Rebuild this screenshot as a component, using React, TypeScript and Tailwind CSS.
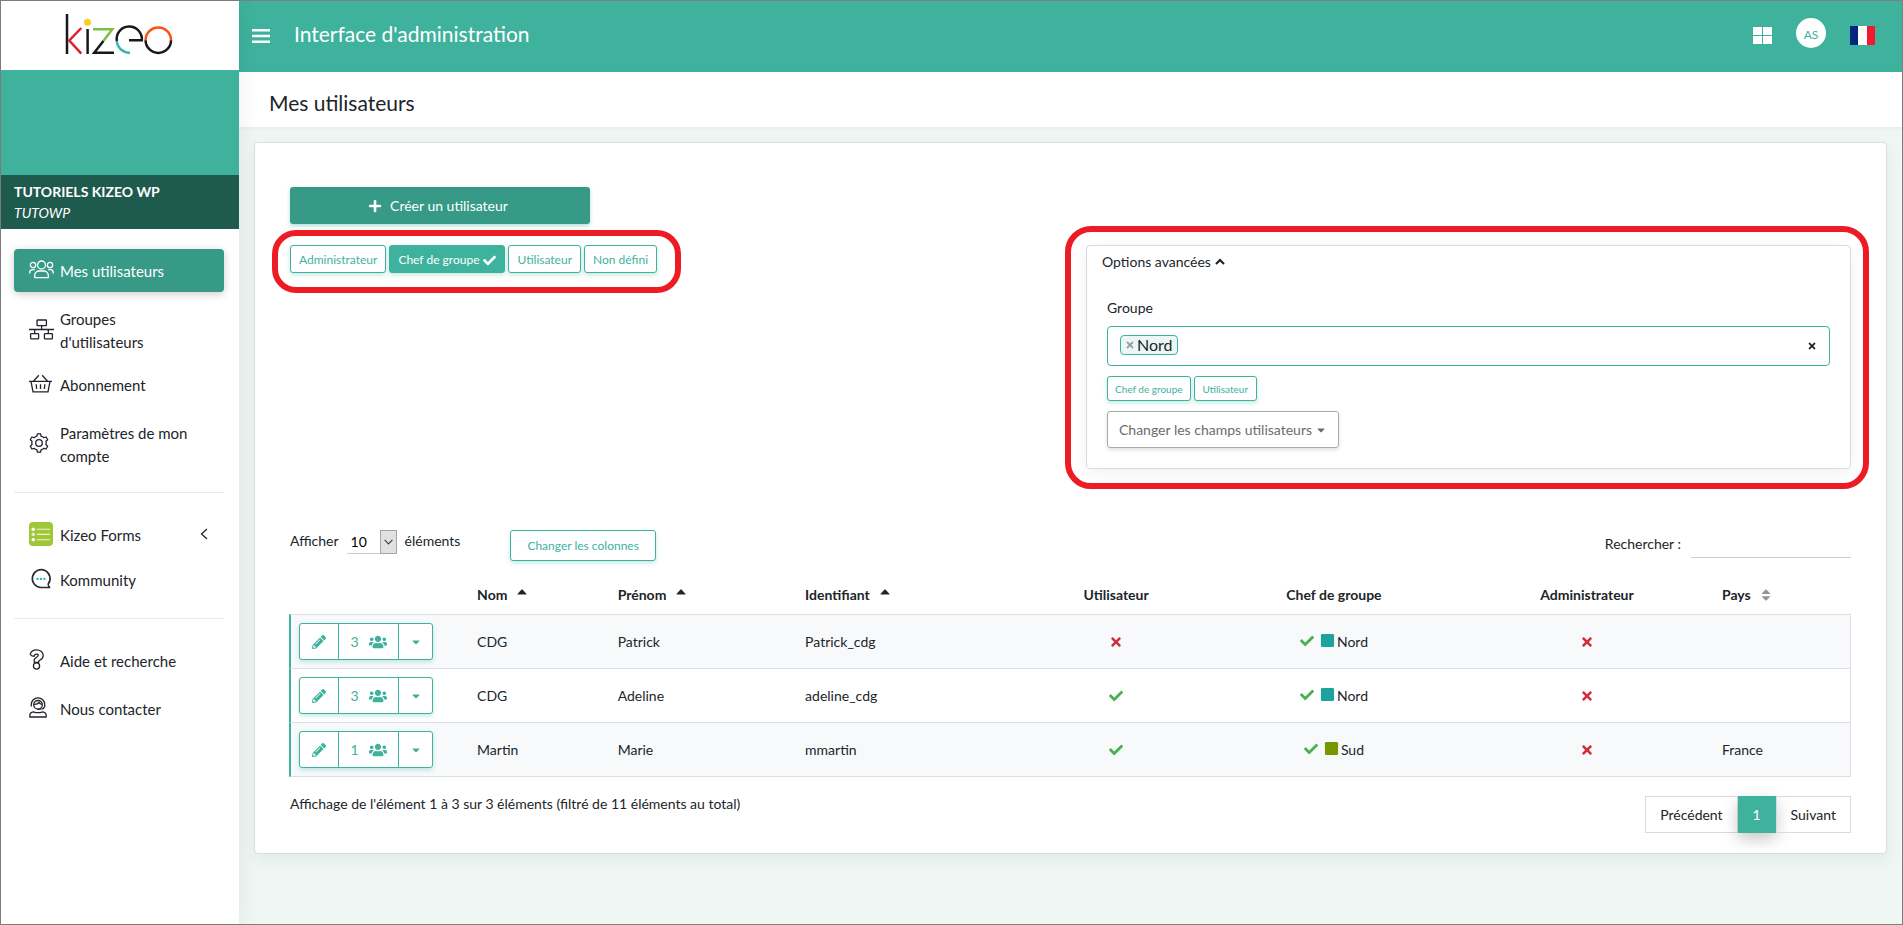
import React from "react";
import {
  FaCaretDown,
  FaCheck,
  FaPencilAlt,
  FaPlus,
  FaSquare,
  FaTimes,
  FaUsers,
} from "react-icons/fa";

function KizeoLogo() {
  return (
    <svg viewBox="65 13 108 42" className="h-[42px] w-[108px]" fill="none" strokeWidth="2.5" role="img" aria-label="kizeo">
      <path d="M67 14V54" stroke="#1a171b" />
      <path d="M81.3 28L69.3 40.5L81.3 53.6" stroke="#e2202c" />
      <path d="M87.6 29V54" stroke="#1a171b" />
      <circle cx="87.5" cy="22.3" r="3.5" fill="#ffcb1f" />
      <path d="M93 29.2H112.3L103.4 41" stroke="#7ac143" />
      <path d="M103.4 41L94.2 52.7H114" stroke="#1a171b" />
      <path d="M116.8 41A12.6 12.6 0 1 1 141.8 40.3H129" stroke="#1a171b" />
      <path d="M116.8 41A12.6 12.6 0 0 0 130 52.7" stroke="#3cb4b4" />
      <path d="M145.6 40.2A12.7 12.7 0 0 1 171 40.2" stroke="#ff4f12" />
      <path d="M145.6 40.2A12.7 12.7 0 0 0 171 40.2" stroke="#1a171b" />
    </svg>
  );
}

function TeamIcon() {
  return (
    <svg viewBox="0 0 25 19" className="h-[19px] w-[25px]" fill="none" stroke="currentColor" strokeWidth="1.3">
      <circle cx="12.5" cy="5" r="4" />
      <circle cx="4" cy="5" r="2.7" />
      <circle cx="21" cy="5" r="2.7" />
      <path d="M5.7 17.6V15.4A4.6 4.6 0 0 1 10.3 11H14.7A4.6 4.6 0 0 1 19.3 15.4V17.6Z" strokeLinejoin="round" />
      <path d="M.8 13.6V12.3A2.8 2.8 0 0 1 3.6 9.7H5.8M24.2 13.6V12.3A2.8 2.8 0 0 0 21.4 9.7H19.2" />
    </svg>
  );
}

function NetworkIcon() {
  return (
    <svg viewBox="0 0 25 21" className="h-[21px] w-[25px]" fill="none" stroke="currentColor" strokeWidth="1.3">
      <rect x="8" y="1" width="9.4" height="5.6" rx=".6" />
      <path d="M12.6 6.6V10.5M0 10.5H25M5.7 10.5V14.6M19.3 10.5V14.6" />
      <rect x="1.6" y="14.6" width="8" height="5.2" rx=".6" />
      <rect x="15.4" y="14.6" width="8" height="5.2" rx=".6" />
    </svg>
  );
}

function BasketIcon() {
  return (
    <svg viewBox="0 0 23 19" className="h-[19px] w-[23px]" fill="none" stroke="currentColor" strokeWidth="1.3">
      <path d="M0 7.4H23M2 7.4L4 17.8H19L21 7.4M4.4 7.2L9.8 1.2M18.6 7.2L13.2 1.2" />
      <path d="M7.2 10.2L7.6 15M11.5 10.2V15M15.8 10.2L15.4 15" />
    </svg>
  );
}

function GearIcon() {
  return (
    <svg viewBox="0 0 20 20" className="h-5 w-5" fill="none" stroke="currentColor" strokeWidth="1.3" strokeLinejoin="round">
      <circle cx="10" cy="10" r="3.3" />
      <path d="M8 3.1L8.4 .9H11.6L12 3.1A7.2 7.2 0 0 1 14.9 4.7L17.1 4L18.7 6.8L17 8.3A7.5 7.5 0 0 1 17 11.7L18.7 13.2L17.1 16L14.9 15.3A7.2 7.2 0 0 1 12 16.9L11.6 19.1H8.4L8 16.9A7.2 7.2 0 0 1 5.1 15.3L2.9 16L1.3 13.2L3 11.7A7.5 7.5 0 0 1 3 8.3L1.3 6.8L2.9 4L5.1 4.7A7.2 7.2 0 0 1 8 3.1Z" />
    </svg>
  );
}

function FormsIcon() {
  return (
    <svg viewBox="0 0 24 24" className="size-6">
      <rect width="24" height="24" rx="4" fill="#9fc739" />
      <g fill="#fff">
        <circle cx="4.3" cy="7.3" r="1.8" />
        <circle cx="4.3" cy="12.4" r="1.8" opacity=".7" />
        <circle cx="4.3" cy="17.8" r="1.8" />
      </g>
      <path d="M8 7.3H21M8 12.4H21M8 17.8H21" stroke="#eef5d4" strokeWidth="1.1" />
    </svg>
  );
}

function ChatIcon() {
  return (
    <svg viewBox="0 0 24 24" className="size-6" fill="none">
      <path d="M20.6 20.5H12A8.9 8.9 0 1 1 19.2 17.1Q19.2 19.4 20.6 20.5Z" stroke="#2b2b33" strokeWidth="1.6" strokeLinejoin="round" />
      <g fill="#18b5cf">
        <rect x="7.6" y="10.9" width="2" height="2" />
        <rect x="11" y="10.9" width="2" height="2" />
        <rect x="14.4" y="10.9" width="2" height="2" />
      </g>
    </svg>
  );
}

function HelpIcon() {
  return (
    <svg viewBox="0 0 15 21" className="h-[21px] w-[15px]" fill="none" stroke="currentColor" strokeWidth="1.3" strokeLinejoin="round">
      <path d="M1.2 5.2C2 2.3 4.6 .9 7.6 .9C11.3 .9 14.2 3.2 14.2 6.4C14.2 9.8 11.6 10.7 9.8 12V13.3H5.2V10.7C5.6 8.7 9.3 8.2 9.3 6.3C9.3 4.9 6.7 4.5 5.6 6.1L5 7.4C3.4 7.3 1.9 6.7 1.2 5.2Z" />
      <circle cx="7.5" cy="17" r="3.1" />
    </svg>
  );
}

function SupportIcon() {
  return (
    <svg viewBox="0 0 18 21" className="h-[21px] w-[18px]" fill="none" stroke="currentColor" strokeWidth="1.3" strokeLinejoin="round">
      <path d="M2.3 9.5V7.5A6.7 6.7 0 0 1 15.7 7.5V9.5A3.6 3.6 0 0 1 12.5 12" />
      <circle cx="9" cy="7.8" r="4.3" />
      <path d="M5 7.3Q8.5 7.5 10 5.3Q11 7 13 7.3M8.5 12.2H12" />
      <path d="M.8 20V18.2Q.9 15.3 4.5 14.8Q9 16.6 13.5 14.8Q17.1 15.3 17.2 18.2V20Z" />
    </svg>
  );
}

function NavItem({
  icon,
  label,
  className = "",
  active = false,
  arrow = false,
}: {
  icon: React.ReactNode;
  label: string;
  className?: string;
  active?: boolean;
  arrow?: boolean;
}) {
  const look = active
    ? "bg-[#369a86] text-white shadow-[0_2px_8px_rgba(0,0,0,0.2)]"
    : "text-[#212529]";
  return (
    <a href="#" className={`flex items-center gap-1.5 rounded px-[15px] pt-[11px] pb-[9px] leading-[23px] ${look} ${className}`}>
      <span className="-mt-1 flex w-[25px] shrink-0">{icon}</span>
      <span className="max-w-[130px]">{label}</span>
      {arrow && (
        <svg viewBox="0 0 8 12" className="-mt-1 mr-px ml-auto h-3 w-2" fill="none" stroke="currentColor" strokeWidth="1.3">
          <path d="M7 1L1.5 6L7 11" />
        </svg>
      )}
    </a>
  );
}

function Sidebar() {
  return (
    <aside className="z-10 flex w-[238px] shrink-0 flex-col bg-white text-[15px] shadow-[0_0_20px_rgba(0,0,0,0.08)]">
      <div className="flex h-[69px] items-center justify-center pr-[3px] pb-1">
        <KizeoLogo />
      </div>
      <div className="h-[105px] bg-[#3eb29d]" />
      <div className="bg-[#1f5a4e] px-[13px] py-1.5 text-sm leading-[21px] text-white">
        <p className="font-bold">TUTORIELS KIZEO WP</p>
        <p className="italic">TUTOWP</p>
      </div>
      <nav className="flex flex-col pt-5 pr-[15px] pl-[13px]">
        <NavItem icon={<TeamIcon />} label="Mes utilisateurs" active />
        <NavItem icon={<NetworkIcon />} label="Groupes d'utilisateurs" className="mt-[5px]" />
        <NavItem icon={<BasketIcon />} label="Abonnement" />
        <NavItem icon={<GearIcon />} label="Paramètres de mon compte" className="mt-[5px]" />
        <hr className="mt-[15px] mb-5 border-[#ebebeb]" />
        <NavItem icon={<FormsIcon />} label="Kizeo Forms" arrow />
        <NavItem icon={<ChatIcon />} label="Kommunity" className="mt-0.5" />
        <hr className="mt-[17px] mb-5 border-[#ebebeb]" />
        <NavItem icon={<HelpIcon />} label="Aide et recherche" />
        <NavItem icon={<SupportIcon />} label="Nous contacter" className="mt-[5px]" />
      </nav>
    </aside>
  );
}

function Header() {
  return (
    <header className="flex h-[71px] items-center bg-[#3eb29d] pr-[27px] pb-[7px] pl-[13px] text-white">
      <button type="button" aria-label="Menu">
        <svg viewBox="0 0 18 14" className="mt-[6px] h-3.5 w-[18px]" fill="currentColor">
          <path d="M0 0H18V2.4H0ZM0 5.8H18V8.2H0ZM0 11.6H18V14H0Z" />
        </svg>
      </button>
      <span className="ml-6 pt-0.5 text-[21px]">Interface d'administration</span>
      <div className="ml-auto flex items-center">
        <button type="button" aria-label="Applications">
          <svg viewBox="0 0 19 17" className="mt-[5px] h-[17px] w-[19px]" fill="currentColor">
            <path d="M0 0H9V8H0ZM10 0H19V8H10ZM0 9H9V17H0ZM10 9H19V17H10Z" />
          </svg>
        </button>
        <button type="button" className="ml-6 size-[30px] rounded-full bg-white pt-1 text-xs text-[#3eb29d]">
          AS
        </button>
        <button type="button" aria-label="Français" className="mt-[5px] ml-6 flex h-[19px] w-[25px]">
          <span className="h-full flex-1 bg-[#00267f]" />
          <span className="h-full flex-1 bg-white" />
          <span className="h-full flex-1 bg-[#f31830]" />
        </button>
      </div>
    </header>
  );
}

const outline = "rounded-[3px] border border-[#3eb29d] bg-white text-[#3eb29d] shadow-[0_2px_4px_rgba(62,178,157,0.3)]";

function RoleFilters() {
  return (
    <div className="relative mt-[21px] flex w-fit gap-[3px] text-xs leading-5">
      <button type="button" className={`${outline} px-2 pt-1 pb-0.5`}>Administrateur</button>
      <button type="button" className="flex items-center gap-1 rounded-[3px] border border-[#3eb29d] bg-[#3eb29d] px-2 pt-1 pb-0.5 text-white shadow-[0_2px_4px_rgba(62,178,157,0.3)]">
        Chef de groupe <FaCheck className="size-[13px]" />
      </button>
      <button type="button" className={`${outline} px-2 pt-1 pb-0.5`}>Utilisateur</button>
      <button type="button" className={`${outline} px-2 pt-1 pb-0.5`}>Non défini</button>
      <div className="pointer-events-none absolute -top-[15px] -right-6 -bottom-5 -left-[18px] rounded-[24px] border-[6px] border-[#ed1c24]" />
    </div>
  );
}

function AdvancedOptions() {
  return (
    <section className="relative mt-[58px] w-[765px] shrink-0 rounded border border-[#d5dde1] bg-white px-5 pt-[5px] pb-5 shadow-[0_4px_16px_rgba(0,0,0,0.06)]">
      <button type="button" className="-ml-[5px] flex items-center gap-1 leading-[21px]">
        Options avancées
        <svg viewBox="0 0 10 7" className="h-[7px] w-2.5" fill="none" stroke="currentColor" strokeWidth="2.2">
          <path d="M1 6L5 2L9 6" />
        </svg>
      </button>
      <label htmlFor="group" className="mt-[25px] block leading-[21px]">Groupe</label>
      <div className="mt-2 flex h-10 items-center rounded border border-[#3eb29d] px-3">
        <span className="mb-0.5 flex h-5 items-center gap-0.5 rounded border border-[#3eb29d] bg-[#ebf7f5] px-1 text-base leading-[18px]">
          <button type="button" aria-label="Retirer Nord">
            <FaTimes className="size-2.5 text-[#999]" />
          </button>
          Nord
        </span>
        <input id="group" className="min-w-0 flex-1 px-2 outline-none" />
        <button type="button" aria-label="Tout effacer">
          <FaTimes className="size-2.5" />
        </button>
      </div>
      <div className="mt-2.5 flex gap-[3px] text-[10px] leading-[18px]">
        <button type="button" className={`${outline} px-[7px] pt-[3px] pb-0.5`}>Chef de groupe</button>
        <button type="button" className={`${outline} px-2 pt-[3px] pb-0.5`}>Utilisateur</button>
      </div>
      <button type="button" className="mt-2.5 flex h-[37px] items-center gap-[3px] rounded-[3px] border border-[#aaa] px-[11px] text-[#6c6c6c] shadow-[0_2px_4px_rgba(0,0,0,0.12)]">
        Changer les champs utilisateurs <FaCaretDown className="size-3" />
      </button>
      <div className="pointer-events-none absolute -top-5 -right-[19px] -bottom-[21px] -left-[22px] rounded-[26px] border-[6px] border-[#ed1c24]" />
    </section>
  );
}

function SortUp() {
  return (
    <svg viewBox="0 0 10 14" className="ml-2.5 inline h-3.5 w-2.5 align-middle" fill="currentColor">
      <path d="M.5 5L4.5 .4H5.5L9.5 5V5.5H.5Z" />
    </svg>
  );
}

function SortBoth() {
  return (
    <svg viewBox="0 0 10 14" className="ml-2.5 inline h-3.5 w-2.5 align-middle" fill="#939699">
      <path d="M.5 5L4.5 .4H5.5L9.5 5ZM.5 7.2H9.5L5.5 11.6H4.5Z" />
    </svg>
  );
}

const Yes = () => <FaCheck className="mb-0.5 inline-block size-3.5 text-[#4caf50]" aria-label="Oui" />;
const No = () => <FaTimes className="mb-0.5 inline-block size-3.5 text-[#cf2e3c]" aria-label="Non" />;

const users = [
  { count: 3, nom: "CDG", prenom: "Patrick", id: "Patrick_cdg", user: false, group: "Nord", color: "text-[#1ea39c]", pays: "" },
  { count: 3, nom: "CDG", prenom: "Adeline", id: "adeline_cdg", user: true, group: "Nord", color: "text-[#1ea39c]", pays: "" },
  { count: 1, nom: "Martin", prenom: "Marie", id: "mmartin", user: true, group: "Sud", color: "text-[#789600]", pays: "France" },
];

function UsersTable() {
  return (
    <div className="mt-3 -ml-px">
      <table className="w-full table-fixed border-separate border-spacing-0 text-left">
        <colgroup>
          <col className="w-[11.4%]" />
          <col className="w-[9%]" />
          <col className="w-[12%]" />
          <col className="w-[14.8%]" />
          <col className="w-[11.5%]" />
          <col className="w-[16.4%]" />
          <col className="w-[16%]" />
          <col className="w-[8.9%]" />
        </colgroup>
        <thead>
          <tr className="h-[41px] *:pt-0.5">
            <th />
            <th className="px-2.5">Nom<SortUp /></th>
            <th className="px-2.5">Prénom<SortUp /></th>
            <th className="px-2.5">Identifiant<SortUp /></th>
            <th className="px-2.5 text-center">Utilisateur</th>
            <th className="px-2.5 text-center">Chef de groupe</th>
            <th className="px-2.5 text-center">Administrateur</th>
            <th className="px-2.5">Pays<SortBoth /></th>
          </tr>
        </thead>
        <tbody>
          {users.map((u) => (
            <tr
              key={u.id}
              className="h-[54px] odd:bg-[#f7f9fb] *:border-t *:border-[#dbdfe4] last:h-[55px] last:*:border-b *:first:border-l-2 *:first:border-l-[#3eb29d] *:last:border-r"
            >
              <td className="px-2">
                <div className={`${outline} flex h-[37px] w-fit items-stretch`}>
                  <button type="button" aria-label="Modifier" className="flex w-[38px] items-center justify-center">
                    <FaPencilAlt className="size-3.5" />
                  </button>
                  <button type="button" className="flex w-[61px] items-center justify-center gap-2.5 border-x border-[#3eb29d]">
                    {u.count} <FaUsers className="size-[18px]" />
                  </button>
                  <button type="button" aria-label="Plus d'actions" className="flex w-[33px] items-center justify-center">
                    <FaCaretDown className="size-3" />
                  </button>
                </div>
              </td>
              <td className="px-2.5">{u.nom}</td>
              <td className="px-2.5">{u.prenom}</td>
              <td className="px-2.5">{u.id}</td>
              <td className="px-2.5 text-center">{u.user ? <Yes /> : <No />}</td>
              <td className="px-2.5">
                <div className="flex items-center justify-center">
                  <Yes />
                  <FaSquare className={`mr-0.5 mb-0.5 ml-1.5 size-[15px] ${u.color}`} />
                  {u.group}
                </div>
              </td>
              <td className="px-2.5 text-center"><No /></td>
              <td className="px-2.5">{u.pays}</td>
            </tr>
          ))}
        </tbody>
      </table>
    </div>
  );
}

export default function App() {
  return (
    <div className="flex min-h-screen border border-[#808080] bg-[#eff7f4] font-['Lato',sans-serif] text-sm text-[#212529]">
      <Sidebar />
      <div className="flex min-w-0 flex-1 flex-col">
        <Header />
        <div className="bg-white px-[30px] pt-[17px] pb-2.5 shadow-[0_1px_4px_rgba(0,0,0,0.06)]">
          <h1 className="text-[21px] leading-7">Mes utilisateurs</h1>
        </div>
        <main className="mx-[15px] mt-[15px] mb-8 rounded border border-[#d8dee2] bg-white px-[35px] pt-11 pb-5 shadow-[0_6px_18px_rgba(0,0,0,0.06)]">
          <div className="flex items-start justify-between">
            <div>
              <button type="button" className="flex h-[37px] w-[300px] items-center justify-center gap-2 rounded-[3px] bg-[#369a86] pr-1 text-white shadow-[0_2px_4px_rgba(62,178,157,0.4)]">
                <FaPlus className="size-3.5" /> Créer un utilisateur
              </button>
              <RoleFilters />
            </div>
            <AdvancedOptions />
          </div>

          <div className="mt-[61px] flex items-start">
            <label htmlFor="length" className="pt-px">Afficher</label>
            <span className="relative mx-2">
              <select id="length" className="h-6 w-[50px] appearance-none border-b border-[#ccc] bg-white pl-1 text-sm text-black outline-none">
                <option>10</option>
              </select>
              <span className="pointer-events-none absolute top-0 right-0 flex h-6 w-[17px] items-center justify-center border border-[#a5a5a5] bg-[#e1e1e1]">
                <svg viewBox="0 0 9 6" className="h-1.5 w-[9px]" fill="none" stroke="#444" strokeWidth="1.2">
                  <path d="M.6 .8L4.5 4.8L8.4 .8" />
                </svg>
              </span>
            </span>
            <label htmlFor="length" className="pt-px">éléments</label>
            <button type="button" className={`${outline} ml-[50px] h-[31px] px-4 text-xs`}>
              Changer les colonnes
            </button>
            <label htmlFor="search" className="mt-1 ml-auto">Rechercher :</label>
            <input id="search" type="search" className="ml-2.5 h-7 w-40 border-b border-[#ccc] outline-none" />
          </div>

          <UsersTable />

          <div className="mt-[19px] flex items-start justify-between">
            <p className="leading-4">Affichage de l'élément 1 à 3 sur 3 éléments (filtré de 11 éléments au total)</p>
            <nav aria-label="Pagination" className="flex h-[37px] items-stretch">
              <a href="#" className="flex items-center border border-[#d9dcdf] px-3.5">Précédent</a>
              <a href="#" aria-current="page" className="flex w-[38px] items-center justify-center bg-[#3eb29d] text-white shadow-[0_6px_16px_rgba(0,0,0,0.22)]">1</a>
              <a href="#" className="flex items-center border border-[#d9dcdf] px-3.5">Suivant</a>
            </nav>
          </div>
        </main>
      </div>
    </div>
  );
}
